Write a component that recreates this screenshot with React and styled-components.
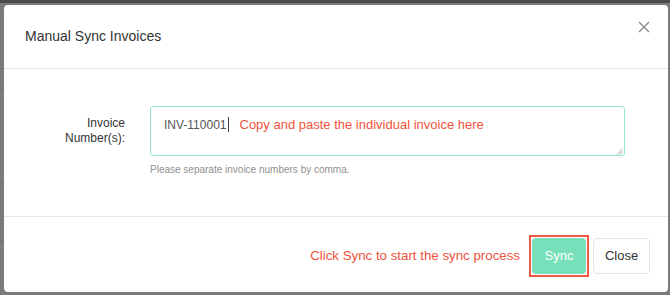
import React from 'react'
import styled, { createGlobalStyle } from 'styled-components'

const GlobalStyle = createGlobalStyle`
  html, body {
    margin: 0;
    padding: 0;
    background: #7a7a7a;
  }
  body {
    font-family: 'Liberation Sans', Arial, sans-serif;
  }
`

function App() {
  return (
    <>
      <GlobalStyle />
      <Backdrop>
        <TopBar />
        <Modal>
          <Header>
            <Title>Manual Sync Invoices</Title>
            <CloseIcon aria-label='close'>
              <svg width='12' height='12' viewBox='0 0 12 12'>
                <path d='M1 1 L11 11 M11 1 L1 11' stroke='#8a8a8a' strokeWidth='1.4' fill='none' />
              </svg>
            </CloseIcon>
          </Header>
          <Body>
            <FormRow>
              <Label>
                Invoice
                <br />
                Number(s):
              </Label>
              <Field>
                <TextArea>
                  <Typed>INV-110001</Typed>
                  <Caret />
                  <Hint>Copy and paste the individual invoice here</Hint>
                  <Grip>
                    <svg width='7' height='7' viewBox='0 0 7 7'>
                      <path d='M1 6.5 L6.5 1 M3.5 6.5 L6.5 3.5' stroke='#999' strokeWidth='0.9' />
                    </svg>
                  </Grip>
                </TextArea>
                <Help>Please separate invoice numbers by comma.</Help>
              </Field>
            </FormRow>
          </Body>
          <Footer>
            <Annotation>Click Sync to start the sync process</Annotation>
            <Highlight>
              <Button $primary>Sync</Button>
            </Highlight>
            <Button>Close</Button>
          </Footer>
        </Modal>
      </Backdrop>
    </>
  )
}

export default App

const Backdrop = styled.div`
  width: 670px;
  height: 295px;
  background:
    linear-gradient(#868686, #868686) 0 94px / 4px 1px no-repeat,
    linear-gradient(#868686, #868686) 0 177px / 4px 1px no-repeat,
    linear-gradient(#868686, #868686) 0 247px / 4px 1px no-repeat,
    #7a7a7a;
  overflow: hidden;
  display: flex;
  flex-direction: column;
`
const TopBar = styled.div`
  height: 3px;
  background: #4a4a4a;
  margin-bottom: 2px;
`
const Modal = styled.div`
  margin-left: 4px;
  width: 664px;
  height: 287px;
  background: #fff;
  border-radius: 4px;
  display: flex;
  flex-direction: column;
`
const Header = styled.div`
  height: 64px;
  border-bottom: 1px solid #e8e8e8;
  display: flex;
  align-items: center;
  justify-content: space-between;
  padding: 0 18px 0 21px;
  box-sizing: border-box;
`
const Title = styled.h4`
  margin: 0;
  margin-top: -1px;
  font-size: 14px;
  font-weight: 400;
  color: #333;
`
const CloseIcon = styled.span`
  display: flex;
  margin-top: -20px;
`
const Body = styled.div`
  height: 148px;
  border-bottom: 1px solid #e8e8e8;
  padding-top: 37px;
  box-sizing: border-box;
`
const FormRow = styled.div`
  display: flex;
  align-items: flex-start;
`
const Label = styled.div`
  width: 121px;
  text-align: right;
  font-size: 12px;
  line-height: 15px;
  color: #333;
  padding-top: 10px;
`
const Field = styled.div`
  margin-left: 25px;
  display: flex;
  flex-direction: column;
`
const TextArea = styled.div`
  position: relative;
  width: 475px;
  height: 50px;
  box-sizing: border-box;
  border: 1px solid #95e8cb;
  border-radius: 3px;
  padding: 10px 13px;
  display: flex;
  align-items: flex-start;
`
const Typed = styled.span`
  font-size: 12px;
  line-height: 16px;
  color: #555;
`
const Caret = styled.span`
  width: 1px;
  height: 15px;
  background: #444;
  margin: 0 11px 0 1px;
`
const Hint = styled.span`
  font-size: 13px;
  line-height: 16px;
  color: #f0533b;
`
const Grip = styled.span`
  position: absolute;
  right: 1px;
  bottom: 0;
  display: flex;
`
const Help = styled.div`
  margin-top: 8px;
  font-size: 10px;
  color: #8f8f8f;
`
const Footer = styled.div`
  flex: 1;
  display: flex;
  align-items: center;
  justify-content: flex-end;
  padding-right: 18px;
  padding-top: 2px;
`
const Annotation = styled.span`
  font-size: 13.3px;
  color: #f0533b;
  margin-right: 9px;
`
const Highlight = styled.div`
  border: 2px solid #ee5b45;
  padding: 1px;
  margin-right: 4px;
  display: flex;
`
const Button = styled.button`
  height: 36px;
  padding: 0;
  width: ${p => (p.$primary ? '54px' : '57px')};
  font-family: inherit;
  font-size: 13px;
  border-radius: 4px;
  border: 1px solid ${p => (p.$primary ? '#77dfb9' : '#e6e6e6')};
  background: ${p => (p.$primary ? '#77dfb9' : '#fff')};
  color: ${p => (p.$primary ? '#fff' : '#333')};
`
